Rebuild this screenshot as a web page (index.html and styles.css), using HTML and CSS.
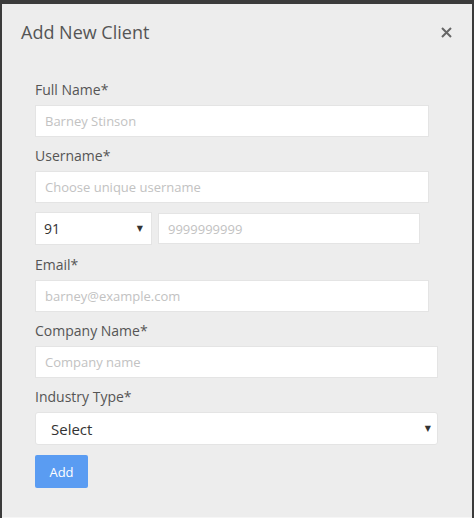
FILE: index.html
```html
<!DOCTYPE html>
<html>
<head>
<meta charset="utf-8">
<link rel="stylesheet" href="styles.css">
</head>
<body>
<div class="modal">
  <div class="modal-header">
    <h2 class="title">Add New Client</h2>
    <svg class="close" width="11" height="11" viewBox="0 0 11 11"><path d="M1 1 L10 10 M10 1 L1 10" stroke="#666" stroke-width="2" fill="none"/></svg>
  </div>
  <form class="form">
    <div class="group">
      <label class="label">Full Name*</label>
      <div class="input w-394"><span class="ph">Barney Stinson</span></div>
    </div>
    <div class="group">
      <label class="label">Username*</label>
      <div class="input w-394"><span class="ph">Choose unique username</span></div>
    </div>
    <div class="phone-row">
      <div class="select code"><span class="val">91</span><span class="caret">&#9660;</span></div>
      <div class="input phone"><span class="ph">9999999999</span></div>
    </div>
    <div class="group">
      <label class="label">Email*</label>
      <div class="input w-394"><span class="ph">barney@example.com</span></div>
    </div>
    <div class="group">
      <label class="label">Company Name*</label>
      <div class="input w-403"><span class="ph">Company name</span></div>
    </div>
    <div class="group last">
      <label class="label">Industry Type*</label>
      <div class="select industry"><span class="val big">Select</span><span class="caret">&#9660;</span></div>
    </div>
    <button type="button" class="btn">Add</button>
  </form>
</div>
</body>
</html>
```

FILE: styles.css
```css
* { box-sizing: border-box; }
html, body { margin: 0; padding: 0; }
body {
  background: #3b3b3b;
  width: 474px;
  height: 518px;
  overflow: hidden;
  font-family: "Open Sans", "Noto Sans", sans-serif;
}
.modal {
  margin: 4px 2px 0 2px;
  height: 514px;
  background: #ededed;
  padding: 16px 19px 0 19px;
  border-bottom: 1px solid #f6f6f6;
}
.modal-header {
  display: flex;
  justify-content: space-between;
  align-items: flex-start;
}
.title {
  margin: 0;
  font-size: 18px;
  line-height: 25px;
  font-weight: 400;
  color: #555;
}
.close {
  display: block;
  margin-top: 7px;
  margin-right: 1px;
}
.form {
  padding-left: 14px;
  margin-top: 35px;
}
.group { margin-bottom: 9px; }
.group.last { margin-bottom: 10px; }
.label {
  display: block;
  font-size: 14px;
  line-height: 20px;
  color: #555;
  margin-bottom: 5px;
}
.input {
  height: 32px;
  background: #fff;
  border: 1px solid #e4e4e4;
  padding: 0 9px;
  display: flex;
  align-items: center;
}
.w-394 { width: 394px; }
.w-403 { width: 403px; }
.ph {
  font-size: 13px;
  color: #c2c2c2;
}
.phone-row {
  display: flex;
  gap: 6px;
  margin-top: 1px;
  margin-bottom: 10px;
}
.select {
  background: #fff;
  border: 1px solid #e4e4e4;
  display: flex;
  align-items: center;
  justify-content: space-between;
}
.code {
  width: 117px;
  height: 33px;
  padding: 0 8px 0 8px;
}
.phone {
  width: 262px;
  height: 31px;
  margin-top: 1px;
}
.val {
  font-size: 14px;
  color: #333;
}
.val.big { font-size: 15px; }
.caret {
  font-size: 8px;
  color: #333;
  font-family: "DejaVu Sans", sans-serif;
}
.industry {
  width: 403px;
  height: 33px;
  border-radius: 3px;
  padding: 0 6px 0 15px;
}
.btn {
  display: block;
  width: 53px;
  height: 33px;
  border: 0;
  border-radius: 2px;
  background: #5a9cf2;
  color: #fff;
  font-family: "Open Sans", sans-serif;
  font-size: 13px;
  padding: 0;
}
```
